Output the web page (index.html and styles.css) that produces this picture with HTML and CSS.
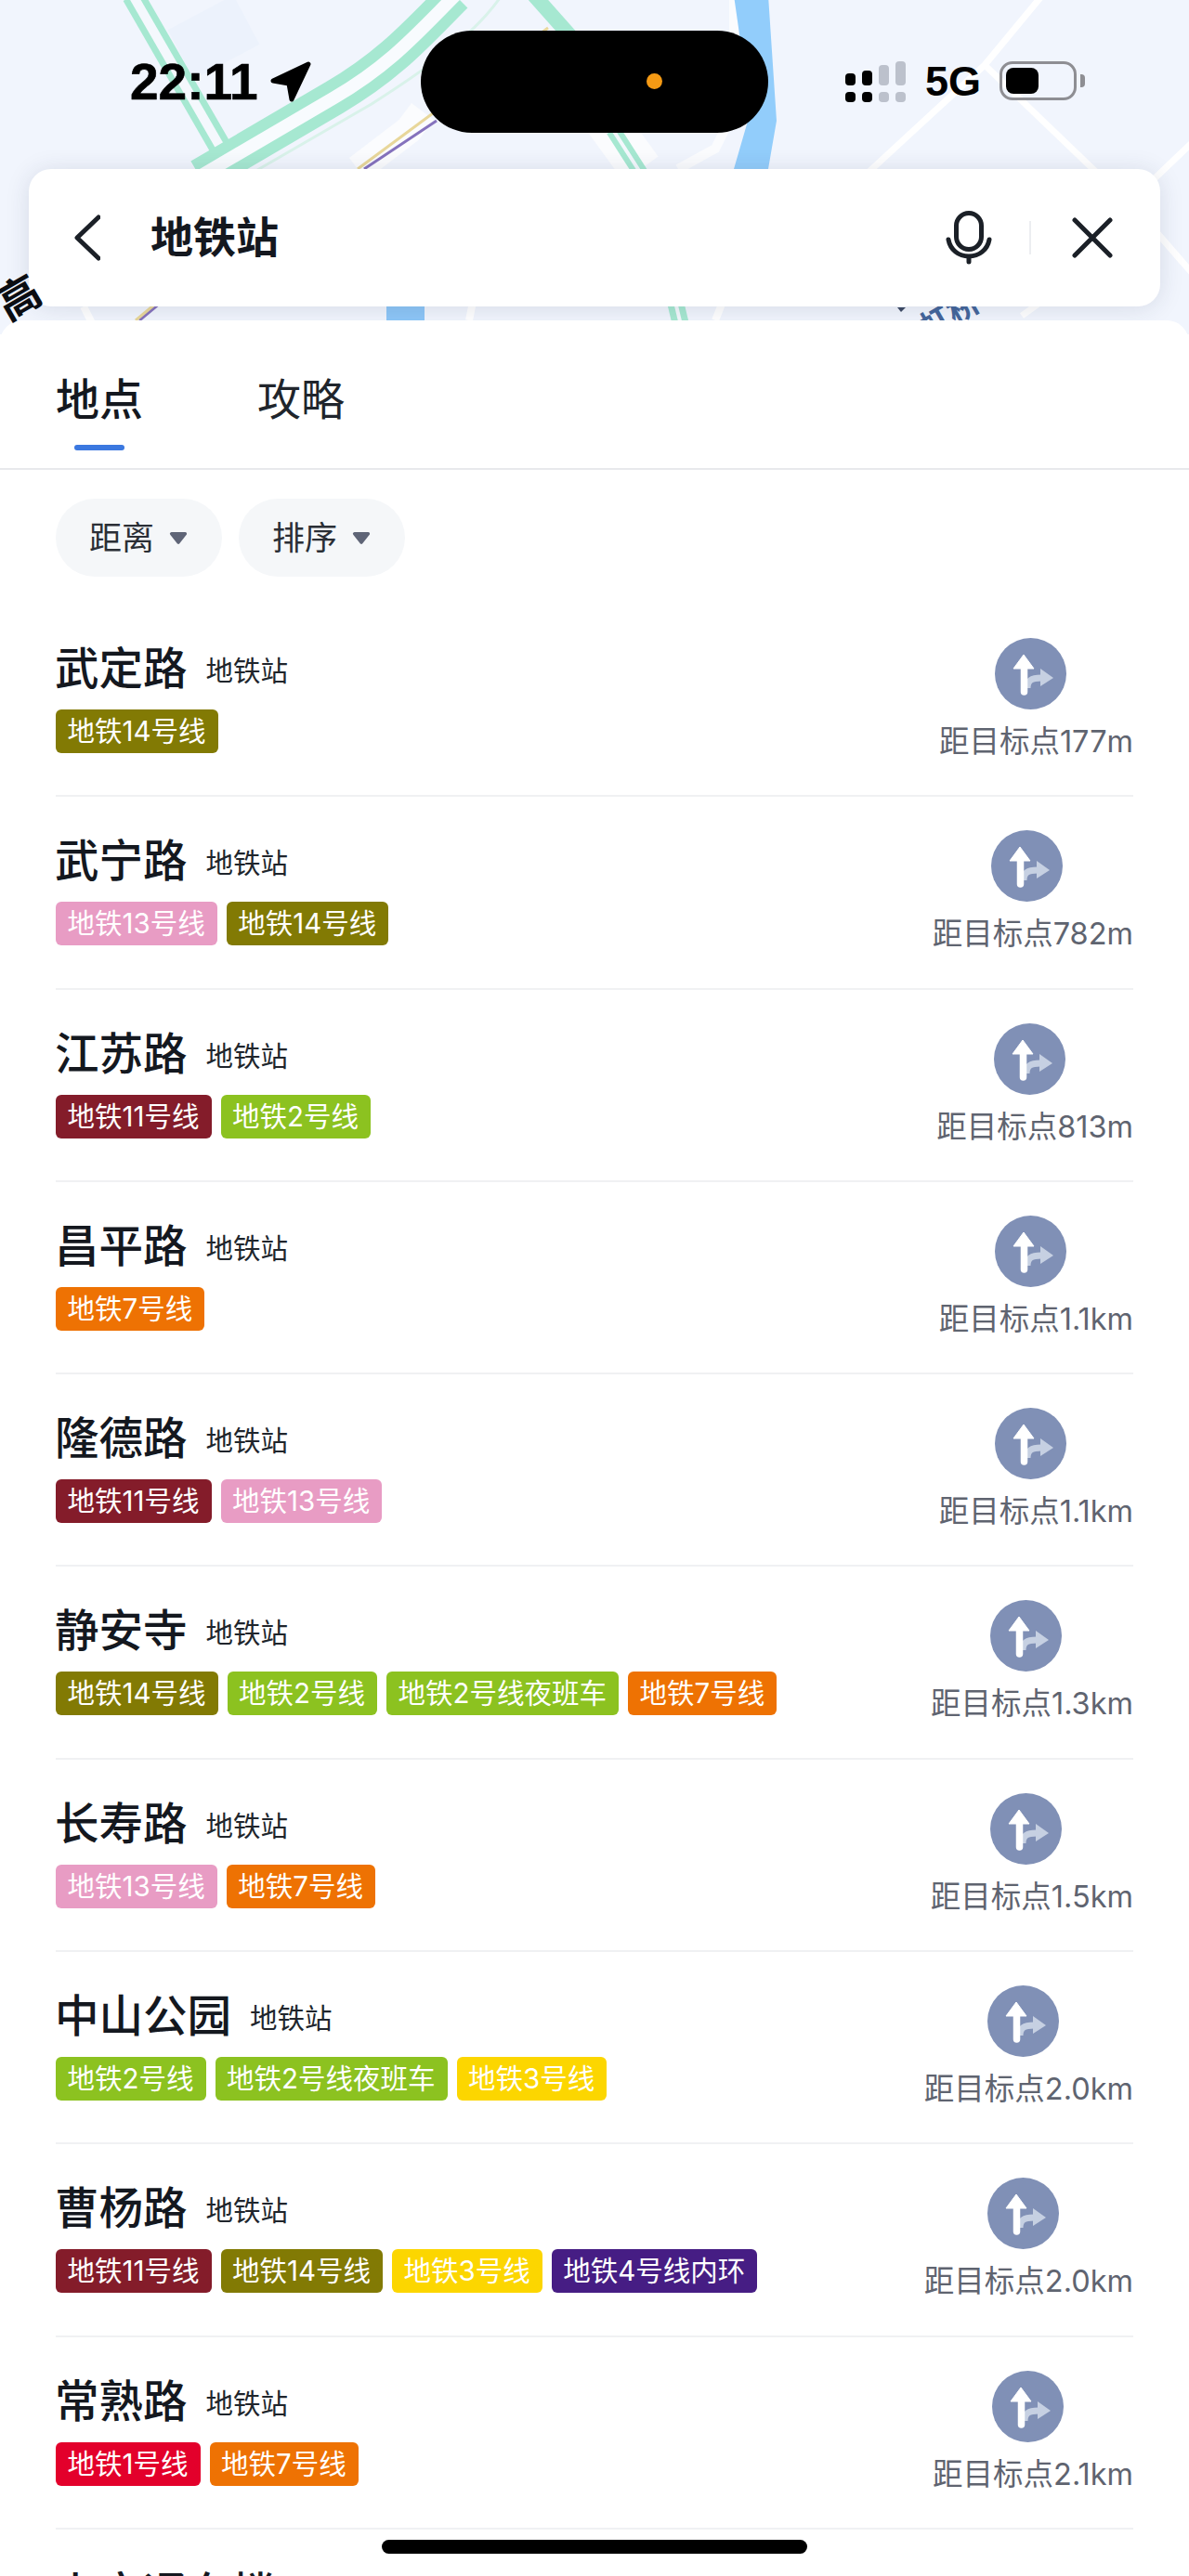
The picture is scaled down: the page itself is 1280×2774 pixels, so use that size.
FILE: index.html

```html
<!DOCTYPE html>
<html lang="zh-CN">
<head>
  <meta charset="UTF-8">
  <meta name="viewport" content="width=device-width, initial-scale=1.0">
  <link rel="stylesheet" href="styles.css">
  <title>地铁站</title>
</head>
<body>
<svg width="0" height="0" class="defs">
  <symbol id="route" viewBox="0 0 77 77">
    <circle cx="38.5" cy="38.5" r="38.5" fill="#8090b6"/>
    <path d="M35 54C35 46 39 43 50 43" fill="none" stroke="#c6d0e2" stroke-width="7"/>
    <path d="M49 33L63 43L49 52Z" fill="#c6d0e2"/>
    <path d="M31.5 30V58" fill="none" stroke="#fff" stroke-width="7.5" stroke-linecap="round"/>
    <path d="M31 18L42 33H20Z" fill="#fff" stroke="#fff" stroke-width="1" stroke-linejoin="round"/>
  </symbol>
  <symbol id="caret" viewBox="0 0 20 14">
    <path d="M3 2.5H17L10 11.5Z" fill="#5f6577" stroke="#5f6577" stroke-width="3" stroke-linejoin="round"/>
  </symbol>
</svg>

<div class="map">
  <svg width="1280" height="360" viewBox="0 0 1280 360" class="map-art">
    <rect x="190" y="10" width="80" height="60" fill="#ecf2fc" transform="rotate(-28 230 40)"/>
    <g fill="none" stroke="#fff">
      <path d="M1122 -5L1060 70L930 190" stroke-width="7"/>
      <path d="M1060 70L1185 190" stroke-width="7"/>
      <path d="M1285 152L1240 195" stroke-width="7"/>
      <path d="M1245 250L1285 296" stroke-width="7"/>
      <path d="M1100 340L1125 322" stroke-width="7"/>
      <path d="M90 330L100 350M505 345L510 320M770 345L780 320" stroke-width="8"/>
      <path d="M385 182L440 140L455 120" stroke-width="30" stroke="#fbfcfe"/>
      <path d="M645 120L690 182" stroke-width="46" stroke="#fbfcfe"/>
      <path d="M790 0V120L770 160L730 182" stroke-width="10" stroke="#fbfcfe"/>
    </g>
    <path d="M143 -5L238 160" fill="none" stroke="#a6e8d1" stroke-width="24"/>
    <path d="M143 -5L238 160" fill="none" stroke="#f4f8fd" stroke-width="10"/>
    <path d="M215 190L360 105C420 70 450 35 490 -5" fill="none" stroke="#a6e8d1" stroke-width="38"/>
    <path d="M215 190L360 105C420 70 450 35 490 -5" fill="none" stroke="#f8fbfe" stroke-width="14"/>
    <path d="M265 190L400 112C450 80 510 40 540 -5" fill="none" stroke="#d9f2ea" stroke-width="3"/>
    <path d="M575 -5L615 40" fill="none" stroke="#a6e8d1" stroke-width="16"/>
    <path d="M660 140L692 190" fill="none" stroke="#a6e8d1" stroke-width="16"/>
    <path d="M660 140L692 190" fill="none" stroke="#f4f8fd" stroke-width="4"/>
    <path d="M727 325L733 350" fill="none" stroke="#a6e8d1" stroke-width="18"/>
    <path d="M727 325L733 350" fill="none" stroke="#f4f8fd" stroke-width="4"/>
    <path d="M590 30L385 182" fill="none" stroke="#e8d79a" stroke-width="3"/>
    <path d="M470 130L392 182" fill="none" stroke="#8572bd" stroke-width="3"/>
    <path d="M180 320L150 345" fill="none" stroke="#8572bd" stroke-width="3"/>
    <path d="M176 320L146 345" fill="none" stroke="#e8d79a" stroke-width="3"/>
    <path d="M790 -5H827L836 130L827 182H790L808 120Z" fill="#92cdfb"/>
    <rect x="416" y="325" width="41" height="25" fill="#8dc6f7"/>
    <path d="M966 331H975L970 336Z" fill="#3d4a64"/>
  </svg>
  <span class="map-label-blue">虹桥</span>
</div>
<span class="map-label">高</span>

<div class="top-bar">
  <div class="time">22:11</div>
  <svg class="loc-arrow" width="44" height="44" viewBox="0 0 44 44">
    <path d="M3 21L41 3L23 41L20 24Z" fill="#000" stroke="#000" stroke-width="5" stroke-linejoin="round"/>
  </svg>
  <div class="status-right">
    <svg width="66" height="44" viewBox="0 0 66 44">
      <g fill="#000">
        <rect x="0" y="13" width="11" height="13" rx="4"/>
        <rect x="18" y="10" width="11" height="16" rx="4"/>
        <rect x="0" y="33" width="11" height="11" rx="4"/>
        <rect x="18" y="33" width="11" height="11" rx="4"/>
      </g>
      <g fill="#bcc1cc">
        <rect x="36" y="4" width="11" height="22" rx="4"/>
        <rect x="54" y="0" width="11" height="26" rx="4"/>
        <rect x="36" y="33" width="11" height="11" rx="4"/>
        <rect x="54" y="33" width="11" height="11" rx="4"/>
      </g>
    </svg>
    <span class="net">5G</span>
    <div class="battery"><div class="battery-fill"></div></div>
  </div>
</div>
<div class="island"><span class="island-dot"></span></div>

<div class="search-card">
  <svg class="back" width="28" height="50" viewBox="0 0 28 50">
    <path d="M26 3L3 25L26 47" fill="none" stroke="#1b2027" stroke-width="5" stroke-linecap="round" stroke-linejoin="round"/>
  </svg>
  <div class="search-text">地铁站</div>
  <svg class="mic" width="50" height="58" viewBox="0 0 50 58">
    <rect x="11.5" y="2.5" width="27" height="39" rx="13.5" fill="none" stroke="#1b2027" stroke-width="5"/>
    <path d="M3 31C5 42 14 49 25 49C36 49 45 42 47 31M25 49V55" fill="none" stroke="#1b2027" stroke-width="5" stroke-linecap="round"/>
  </svg>
  <div class="search-sep"></div>
  <svg class="close" width="44" height="44" viewBox="0 0 44 44">
    <path d="M3 3L41 41M41 3L3 41" fill="none" stroke="#1b2027" stroke-width="5" stroke-linecap="round"/>
  </svg>
</div>

<div class="sheet">
  <div class="tabs">
    <div class="tab active">地点</div>
    <div class="tab">攻略</div>
  </div>
  <div class="filters">
    <div class="pill"><span class="pill-text">距离</span><svg class="caret"><use href="#caret"/></svg></div>
    <div class="pill"><span class="pill-text">排序</span><svg class="caret"><use href="#caret"/></svg></div>
  </div>

  <div class="row">
    <div class="info">
      <div class="title"><span class="name">武定路</span><span class="kind">地铁站</span></div>
      <div class="tags"><span class="tag l14">地铁14号线</span></div>
    </div>
    <div class="dist"><svg class="route"><use href="#route"/></svg><span>距目标点177m</span></div>
  </div>
  <div class="row">
    <div class="info">
      <div class="title"><span class="name">武宁路</span><span class="kind">地铁站</span></div>
      <div class="tags"><span class="tag l13">地铁13号线</span><span class="tag l14">地铁14号线</span></div>
    </div>
    <div class="dist"><svg class="route"><use href="#route"/></svg><span>距目标点782m</span></div>
  </div>
  <div class="row">
    <div class="info">
      <div class="title"><span class="name">江苏路</span><span class="kind">地铁站</span></div>
      <div class="tags"><span class="tag l11">地铁11号线</span><span class="tag l2">地铁2号线</span></div>
    </div>
    <div class="dist"><svg class="route"><use href="#route"/></svg><span>距目标点813m</span></div>
  </div>
  <div class="row">
    <div class="info">
      <div class="title"><span class="name">昌平路</span><span class="kind">地铁站</span></div>
      <div class="tags"><span class="tag l7">地铁7号线</span></div>
    </div>
    <div class="dist"><svg class="route"><use href="#route"/></svg><span>距目标点1.1km</span></div>
  </div>
  <div class="row">
    <div class="info">
      <div class="title"><span class="name">隆德路</span><span class="kind">地铁站</span></div>
      <div class="tags"><span class="tag l11">地铁11号线</span><span class="tag l13">地铁13号线</span></div>
    </div>
    <div class="dist"><svg class="route"><use href="#route"/></svg><span>距目标点1.1km</span></div>
  </div>
  <div class="row">
    <div class="info">
      <div class="title"><span class="name">静安寺</span><span class="kind">地铁站</span></div>
      <div class="tags"><span class="tag l14">地铁14号线</span><span class="tag l2">地铁2号线</span><span class="tag l2">地铁2号线夜班车</span><span class="tag l7">地铁7号线</span></div>
    </div>
    <div class="dist"><svg class="route"><use href="#route"/></svg><span>距目标点1.3km</span></div>
  </div>
  <div class="row">
    <div class="info">
      <div class="title"><span class="name">长寿路</span><span class="kind">地铁站</span></div>
      <div class="tags"><span class="tag l13">地铁13号线</span><span class="tag l7">地铁7号线</span></div>
    </div>
    <div class="dist"><svg class="route"><use href="#route"/></svg><span>距目标点1.5km</span></div>
  </div>
  <div class="row">
    <div class="info">
      <div class="title"><span class="name">中山公园</span><span class="kind">地铁站</span></div>
      <div class="tags"><span class="tag l2">地铁2号线</span><span class="tag l2">地铁2号线夜班车</span><span class="tag l3">地铁3号线</span></div>
    </div>
    <div class="dist"><svg class="route"><use href="#route"/></svg><span>距目标点2.0km</span></div>
  </div>
  <div class="row">
    <div class="info">
      <div class="title"><span class="name">曹杨路</span><span class="kind">地铁站</span></div>
      <div class="tags"><span class="tag l11">地铁11号线</span><span class="tag l14">地铁14号线</span><span class="tag l3">地铁3号线</span><span class="tag l4">地铁4号线内环</span></div>
    </div>
    <div class="dist"><svg class="route"><use href="#route"/></svg><span>距目标点2.0km</span></div>
  </div>
  <div class="row">
    <div class="info">
      <div class="title"><span class="name">常熟路</span><span class="kind">地铁站</span></div>
      <div class="tags"><span class="tag l1">地铁1号线</span><span class="tag l7">地铁7号线</span></div>
    </div>
    <div class="dist"><svg class="route"><use href="#route"/></svg><span>距目标点2.1km</span></div>
  </div>
  <div class="row">
    <div class="info">
      <div class="title"><span class="name">上宝通东楼</span></div>
    </div>
  </div>
</div>

<div class="home-bar"></div>
</body>
</html>
```

FILE: styles.css

```css
* {
  box-sizing: border-box;
}

html, body {
  margin: 0;
  padding: 0;
}

body {
  position: relative;
  width: 1280px;
  height: 2774px;
  overflow: hidden;
  background: #fff;
  font-family: Inter, "Noto Sans CJK SC", "Noto Sans", sans-serif;
  color: #14181f;
}

.defs {
  position: absolute;
}

/* map behind the header */
.map {
  position: absolute;
  top: 0;
  left: 0;
  width: 1280px;
  height: 360px;
  background: #f1f5fd;
  overflow: hidden;
}

.map-art {
  display: block;
}

.map-label-blue {
  position: absolute;
  left: 988px;
  top: 320px;
  font-size: 34px;
  line-height: 38px;
  font-weight: 700;
  color: #44669b;
  transform: rotate(-30deg);
}

.map-label {
  position: absolute;
  left: -3px;
  top: 292px;
  z-index: 5;
  font-size: 46px;
  line-height: 56px;
  font-weight: 700;
  color: #0b0d12;
  transform: rotate(-30deg);
}

/* status bar */
.top-bar {
  position: relative;
  display: flex;
  align-items: center;
  height: 182px;
  padding: 0 112px 6px 140px;
}

.time {
  font-family: "Liberation Sans", sans-serif;
  font-weight: 700;
  font-size: 55px;
  line-height: 60px;
  color: #000;
  -webkit-text-stroke: 0.6px #000;
}

.loc-arrow {
  margin-left: 13px;
}

.status-right {
  display: flex;
  align-items: center;
  margin-left: auto;
}

.net {
  margin-left: 20px;
  font-family: "Liberation Sans", sans-serif;
  font-weight: 700;
  font-size: 45px;
  line-height: 50px;
  color: #000;
}

.battery {
  position: relative;
  width: 83px;
  height: 42px;
  margin-top: -2px;
  margin-left: 20px;
  margin-right: 9px;
  padding: 4px;
  border: 3px solid #8e8e93;
  border-radius: 14px;
}

.battery::after {
  content: "";
  position: absolute;
  right: -12px;
  top: 11px;
  width: 5px;
  height: 14px;
  border-radius: 0 4px 4px 0;
  background: #8e8e93;
}

.battery-fill {
  width: 35px;
  height: 100%;
  border-radius: 8px;
  background: #000;
}

.island {
  position: absolute;
  left: 453px;
  top: 33px;
  width: 374px;
  height: 110px;
  border-radius: 55px;
  background: #000;
}

.island-dot {
  position: absolute;
  left: 243px;
  top: 46px;
  width: 17px;
  height: 17px;
  border-radius: 50%;
  background: #f59a14;
}

/* search */
.search-card {
  position: relative;
  display: flex;
  align-items: center;
  height: 148px;
  margin: 0 31px;
  padding: 0 51px 0 49px;
  background: #fff;
  border-radius: 24px;
  box-shadow: 0 2px 26px rgba(40, 50, 80, 0.13);
}

.search-text {
  margin-left: 54px;
  margin-right: auto;
  padding-bottom: 3px;
  font-size: 46px;
  line-height: 60px;
  font-weight: 700;
  color: #14181f;
}

.search-sep {
  width: 2px;
  height: 36px;
  margin: 0 44px 0 40px;
  background: #eceef1;
}

/* result sheet */
.sheet {
  position: relative;
  margin-top: 15px;
  height: 2429px;
  overflow: hidden;
  background: #fff;
  border-radius: 24px 24px 0 0;
}

.tabs {
  display: flex;
  gap: 123px;
  height: 161px;
  padding: 54px 0 0 60px;
  border-bottom: 2px solid #e8e9ec;
}

.tab {
  position: relative;
  font-size: 47px;
  line-height: 62px;
  height: 62px;
  color: #20252c;
}

.tab.active {
  font-weight: 500;
  color: #14181f;
}

.tab.active::after {
  content: "";
  position: absolute;
  left: 20px;
  top: 80px;
  width: 54px;
  height: 6px;
  border-radius: 3px;
  background: #3b78e0;
}

.filters {
  display: flex;
  gap: 18px;
  padding: 31px 0 30px 60px;
}

.pill {
  display: flex;
  align-items: center;
  width: 179px;
  height: 84px;
  padding-left: 36px;
  border-radius: 42px;
  background: #f5f7f9;
  font-size: 35px;
  color: #2b2f36;
}

.pill-text {
  margin-top: -5px;
}

.caret {
  width: 22px;
  height: 15px;
  margin-left: 15px;
}

.row {
  display: flex;
  justify-content: space-between;
  height: 207.3px;
  margin: 0 60px;
  padding-top: 36px;
  border-bottom: 2px solid #f0f1f3;
}

.info {
  padding-top: 3px;
}

.title {
  display: flex;
  align-items: center;
  height: 60px;
}

.name {
  margin-left: -1px;
  font-size: 47.5px;
  line-height: 60px;
  font-weight: 500;
  color: #14181f;
}

.kind {
  margin-left: 20px;
  font-size: 29.5px;
  color: #20252c;
}

.tags {
  display: flex;
  gap: 10px;
  margin-top: 14px;
}

.tag {
  height: 47px;
  padding: 0 13px 0 12.5px;
  border-radius: 6px;
  font-size: 29.5px;
  line-height: 47px;
  color: #fff;
}

.l1 { background: #e3002b; }
.l2 { background: #8cc220; }
.l3 { background: #fcd600; }
.l4 { background: #461d84; }
.l7 { background: #ee7203; }
.l11 { background: #841c2a; }
.l13 { background: #e89cc4; }
.l14 { background: #827a04; }

.dist {
  display: flex;
  flex-direction: column;
  align-items: center;
  font-size: 32.5px;
  line-height: 44px;
  color: #5f6470;
}

.route {
  width: 77px;
  height: 77px;
  margin-right: 12px;
  margin-bottom: 13px;
}

.home-bar {
  position: absolute;
  left: 411px;
  top: 2735px;
  width: 458px;
  height: 15px;
  border-radius: 8px;
  background: #000;
}
```
